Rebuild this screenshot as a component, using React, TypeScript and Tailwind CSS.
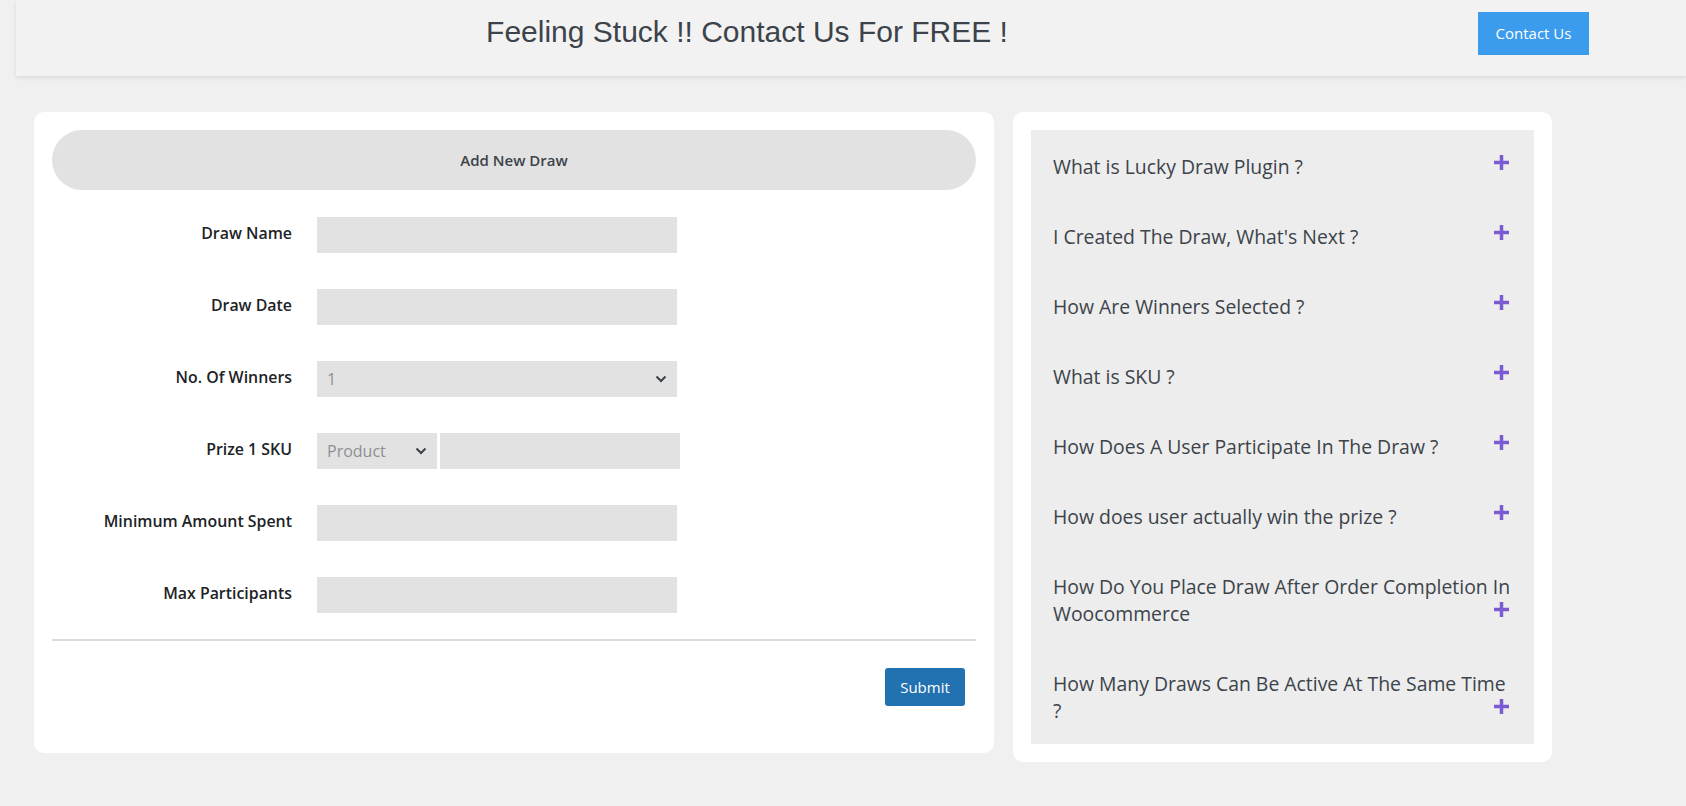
import { useState } from "react";

const faqs = [
  "What is Lucky Draw Plugin ?",
  "I Created The Draw, What's Next ?",
  "How Are Winners Selected ?",
  "What is SKU ?",
  "How Does A User Participate In The Draw ?",
  "How does user actually win the prize ?",
  "How Do You Place Draw After Order Completion In Woocommerce",
  "How Many Draws Can Be Active At The Same Time ?",
];

function Chevron() {
  return (
    <svg width="12" height="8" viewBox="0 0 12 8" className="pointer-events-none absolute right-[10px] top-1/2 -translate-y-1/2">
      <path d="M1.5 1.5 L6 6 L10.5 1.5" fill="none" stroke="#3c434a" strokeWidth="2" />
    </svg>
  );
}

function Plus() {
  return (
    <svg width="15" height="15" viewBox="0 0 15 15">
      <rect x="5.75" y="0" width="3.5" height="15" fill="#7b5bd1" />
      <rect x="0" y="5.75" width="15" height="3.5" fill="#7b5bd1" />
    </svg>
  );
}

function Row({ label, children }: { label: string; children: React.ReactNode }) {
  return (
    <div className="flex items-center">
      <label className="w-[240px] shrink-0 pb-[3px] text-right text-[15.9px] font-semibold text-[#1d2327]">{label}</label>
      <div className="ml-[25px] flex">{children}</div>
    </div>
  );
}

const inputCls = "h-[36px] bg-[#e2e2e2] px-[10px] text-[16px] text-[#3c434a] outline-none border-0";

export default function App() {
  const [winners, setWinners] = useState("1");

  return (
    <div className="min-h-screen bg-[#f0f0f0] font-['Open_Sans',sans-serif]">
      <header className="ml-[16px] flex h-[76px] items-start bg-[#f2f2f2] shadow-[0_2px_4px_rgba(0,0,0,0.09)]">
        <h1 className="flex-1 mt-[15px] text-center font-['Liberation_Sans',Arial,sans-serif] text-[30px] leading-[34px] text-[#3c434a]">
          Feeling Stuck !! Contact Us For FREE !
        </h1>
        <button className="mt-[12px] mr-[97px] h-[43px] w-[111px] bg-[#3b9bed] text-[15px] text-white">
          Contact Us
        </button>
      </header>

      <main className="flex items-start gap-[19px] pl-[34px] pt-[36px]">
        <section className="w-[960px] rounded-[10px] bg-white p-[18px] pb-[47px]">
          <div className="flex h-[60px] items-center justify-center rounded-full bg-[#e2e2e2] text-[15px] font-semibold text-[#3c434a]">
            Add New Draw
          </div>

          <div className="mt-[27px] flex flex-col gap-[36px]">
            <Row label="Draw Name">
              <input className={inputCls + " w-[360px]"} />
            </Row>
            <Row label="Draw Date">
              <input className={inputCls + " w-[360px]"} />
            </Row>
            <Row label="No. Of Winners">
              <div className="relative">
                <select
                  value={winners}
                  onChange={(e) => setWinners(e.target.value)}
                  className="h-[36px] w-[360px] appearance-none border-0 bg-[#e2e2e2] px-[10px] text-[16px] text-[#8c8f94] outline-none"
                >
                  <option>1</option>
                  <option>2</option>
                  <option>3</option>
                </select>
                <Chevron />
              </div>
            </Row>
            <Row label="Prize 1 SKU">
              <div className="relative">
                <select className="h-[36px] w-[120px] appearance-none border-0 bg-[#e2e2e2] px-[10px] text-[16px] text-[#8c8f94] outline-none">
                  <option>Product</option>
                </select>
                <Chevron />
              </div>
              <input className="ml-[3px] h-[36px] w-[240px] border-0 bg-[#e2e2e2] px-[10px] outline-none" />
            </Row>
            <Row label="Minimum Amount Spent">
              <input className={inputCls + " w-[360px]"} />
            </Row>
            <Row label="Max Participants">
              <input className={inputCls + " w-[360px]"} />
            </Row>
          </div>

          <hr className="mt-[26px] border-0 border-t-2 border-[#dcdcde]" />

          <div className="mt-[27px] flex justify-end pr-[11px]">
            <button className="h-[38px] w-[80px] rounded-[3px] bg-[#2271b1] text-[15px] text-white">Submit</button>
          </div>
        </section>

        <aside className="w-[539px] rounded-[10px] bg-white p-[18px]">
          <div className="bg-[#ededed]">
            {faqs.map((q) => (
              <div key={q} className="relative pl-[22px] pt-[23px] pb-[20px]">
                <p className="w-[460px] text-[19.4px] leading-[27px] text-[#3c434a]">{q}</p>
                <span className="absolute right-[25px] bottom-[30px] flex">
                  <Plus />
                </span>
              </div>
            ))}
          </div>
        </aside>
      </main>
    </div>
  );
}
